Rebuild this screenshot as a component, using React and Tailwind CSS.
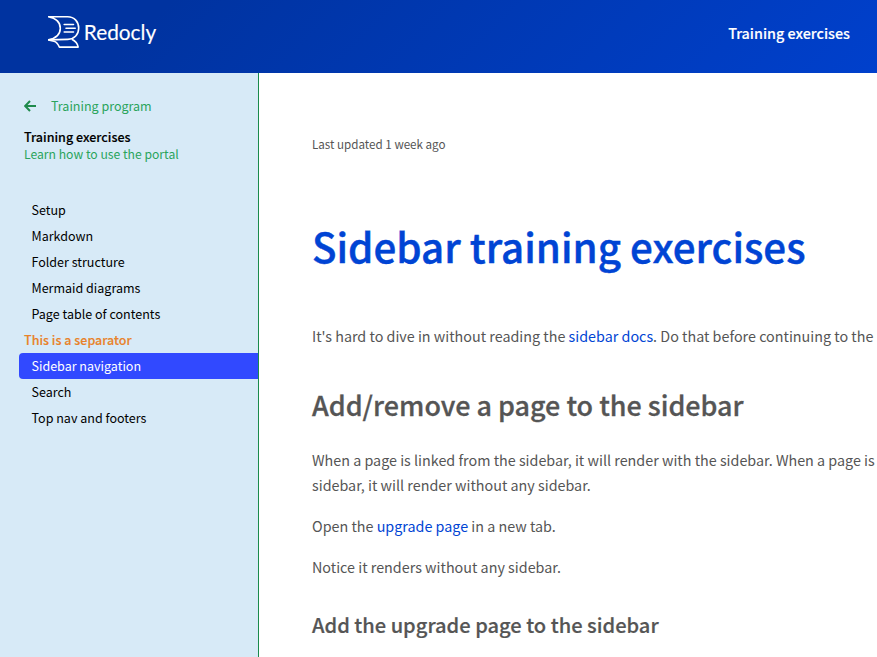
import React from "react";

const pagesTop = ["Setup", "Markdown", "Folder structure", "Mermaid diagrams", "Page table of contents"];
const pagesBottom = ["Sidebar navigation", "Search", "Top nav and footers"];
const activePage = "Sidebar navigation";

function Logo() {
  return (
    <svg width="112" height="36" viewBox="48 14 112 36" fill="none" stroke="white" aria-label="Redocly">
      <g strokeWidth="1.6" strokeLinejoin="round">
        <path d="M48.4 16.8H67.6C74.5 16.8 78.7 21.8 78.7 28.1C78.7 34.4 74.5 39.2 67.8 39.4L48.4 39.9C55.5 38.4 60.3 34.4 60.3 28.3C60.3 22.2 55.5 18.2 48.4 16.8Z" />
        <path d="M48.4 39.9L54 41.2C57 42 58.2 44.4 59.4 47.1H78.2C77.6 43.6 75.5 41 71.8 39.2" />
        <path d="M64.2 24.5H73.5M66 28.3H75.2M64.2 32H73.5" strokeLinecap="round" />
      </g>
      <text x="83.8" y="40" fill="white" strokeWidth="0.15" textLength="72.4" lengthAdjust="spacingAndGlyphs" className="font-[Lato,sans-serif] text-[22px]">
        Redocly
      </text>
    </svg>
  );
}

function NavItem({ label, active }) {
  return (
    <li className={active ? "ml-[19px] flex h-[26px] items-center rounded-l bg-[#3149ff] pl-[12.5px] text-white" : "flex h-[26px] items-center pl-[31.5px] text-black"}>
      {label}
    </li>
  );
}

function Sidebar() {
  return (
    <aside className="w-[259px] shrink-0 border-r border-[#1a8a4c] bg-[#d7eaf7] text-[12.53px] leading-[18px]">
      <div className="flex items-center gap-[15px] pt-6 pl-6 text-[#2aa45c]">
        <svg width="12" height="12" viewBox="0 0 12 12" fill="none" stroke="#1f8a4c" strokeWidth="2">
          <path d="M6 1L1.2 6L6 11M1.2 6H12" />
        </svg>
        <span>Training program</span>
      </div>
      <div className="mt-[13px] pl-6">
        <div className="text-[12.56px] font-medium text-black [-webkit-text-stroke:0.15px]">Training exercises</div>
        <div className="-mt-px text-[12.18px] text-[#2aa45c]">Learn how to use the portal</div>
      </div>
      <ul className="mt-[34px]">
        {pagesTop.map((p) => <NavItem key={p} label={p} />)}
        <li className="flex h-[26px] items-center pl-6 font-medium text-[#e8822a] [-webkit-text-stroke:0.15px]">This is a separator</li>
        {pagesBottom.map((p) => <NavItem key={p} label={p} active={p === activePage} />)}
      </ul>
    </aside>
  );
}

export default function App() {
  return (
    <div className="flex h-[657px] w-[877px] flex-col overflow-hidden bg-white font-['Noto_Sans_CJK_SC','Noto_Sans',sans-serif]">
      <header className="flex h-[73px] shrink-0 justify-between bg-[linear-gradient(135deg,#0033a0_18%,#0040cc_100%)] pt-[14px] pr-[27px] pl-12">
        <Logo />
        <span className="pt-[7px] text-[14.35px] leading-6 font-medium text-white [-webkit-text-stroke:0.15px]">Training exercises</span>
      </header>
      <div className="flex min-h-0 flex-1">
        <Sidebar />
        <main className="min-w-0 flex-1 overflow-hidden pl-[53px] text-[14.33px] leading-[25px] whitespace-nowrap text-[#555]">
          <p className="mt-[58px] text-[11.64px]">Last updated 1 week ago</p>
          <h1 className="mt-[60px] text-[40.3px] leading-[60px] font-medium text-[#0044d4] [-webkit-text-stroke:0.45px]">Sidebar training exercises</h1>
          <p className="mt-[47px]">
            It's hard to dive in without reading the <a className="text-[#0044d4]">sidebar docs</a>. Do that before continuing to the
          </p>
          <h2 className="mt-[37px] text-[26.9px] leading-[40px] font-medium [-webkit-text-stroke:0.3px]">Add/remove a page to the sidebar</h2>
          <p className="mt-[22px]">
            When a page is linked from the sidebar, it will render with the sidebar. When a page is
            <br />
            sidebar, it will render without any sidebar.
          </p>
          <p className="mt-4">
            Open the <a className="text-[#0044d4]">upgrade page</a> in a new tab.
          </p>
          <p className="mt-4">Notice it renders without any sidebar.</p>
          <h3 className="mt-[31px] text-[20.1px] leading-[30px] font-medium [-webkit-text-stroke:0.2px]">Add the upgrade page to the sidebar</h3>
        </main>
      </div>
    </div>
  );
}
